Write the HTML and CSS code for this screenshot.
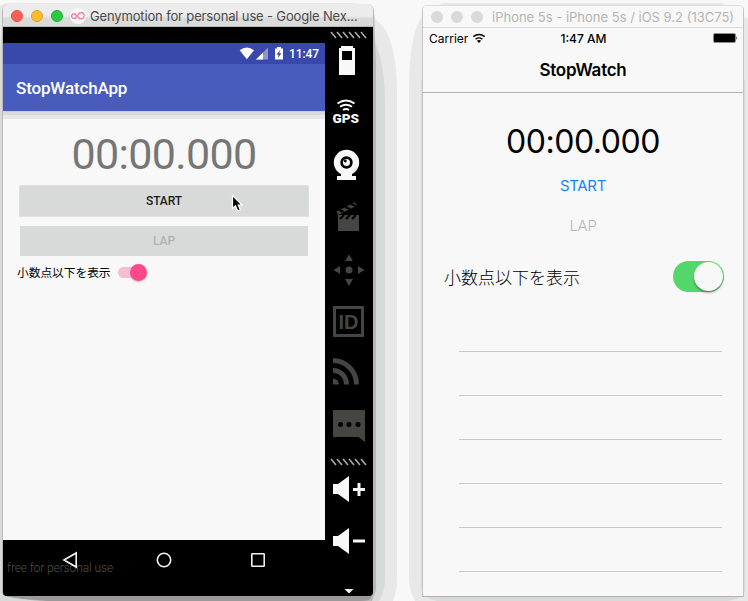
FILE: index.html
```html
<!DOCTYPE html>
<html lang="ja">
<head>
<meta charset="utf-8">
<title>StopWatch</title>
<link rel="stylesheet" href="styles.css">
</head>
<body>
<svg class="shadows" viewBox="0 0 748 601" aria-hidden="true">
  <path fill="#e8e8e8" d="M0 6Q3 2 25 3H350Q373 3 376 20C392 30 397 62 397 90V578Q397 592 393 601H0Z"/>
  <path fill="#d8dad9" d="M0 50L3 12H373V38Q385 62 385 100V582Q384 594 379 601H0Z"/>
  <path fill="#b9b7b8" d="M2 12Q2 4 9 4H367Q374 4 374 12L376 65V590L372 601H48Q20 601 2 593Z"/>
  <path fill="#9b9999" d="M5 590H373L371 598Q370 601 360 601H48Q10 598 5 596Z"/>
  <path fill="#e8e8e8" d="M443 3H722L748 19V601H415Q409 590 409 578V90Q409 35 422 16Z"/>
  <path fill="#d8dad9" d="M421 80H745V590Q744 599 727 601H437Q423 598 421 590Z"/>
</svg>
<main class="desktop">
  <section class="window genymotion">
    <header class="titlebar">
      <i class="dot red"></i><i class="dot yellow"></i><i class="dot green"></i>
      <svg class="geny-logo" viewBox="0 0 16 16"><circle cx="8" cy="8" r="8" fill="#f8f8f8"/><g fill="none" stroke="#ee719d" stroke-width="1.2"><circle cx="4" cy="8.2" r="2.3"/><circle cx="11" cy="7.7" r="3.1"/></g></svg>
      <span class="window-title">Genymotion for personal use - Google Nex...</span>
    </header>
    <div class="emulator">
      <div class="phone">
        <div class="statusbar">
          <svg class="status-icons" viewBox="238 44 48 20"><path fill="#fff" d="M239.700 50.200Q246.800 45 254 50.200L246.800 59.300Z"/><path fill="#8d96cf" d="M256 59.500L268 47.500V59.500Z"/><path fill="#fff" d="M256 59.500L263 52.500V59.500Z"/><path fill="#fff" d="M275 48.500H277V47H281V48.500H283V59.500H275Z"/><path fill="#3949ab" d="M280 50L276.500 54.700H278.500L277.800 58L281.500 53.300H279.300Z"/></svg>
          <span>11:47</span>
        </div>
        <div class="appbar">StopWatchApp</div>
        <div class="content">
          <div class="time">00:00.000</div>
          <button class="button start">START</button>
          <button class="button lap">LAP</button>
          <label class="switch-row"><span>小数点以下を表示</span><i class="switch"></i></label>
        </div>
        <div class="navbar">
          <span class="license">free for personal use</span>
          <svg class="nav-icons" viewBox="3 540 322 56" fill="none" stroke="#f1f1f1" stroke-width="1.600"><path d="M64 560L76.200 553V567Z"/><circle cx="164" cy="560" r="6.700"/><rect x="251.800" y="553.800" width="12.400" height="12.400" rx=".5"/></svg>
        </div>
      </div>
      <aside class="toolbar">
        <svg height="15" viewBox="325 27 48 15"><path class="grip" d="M331 32l5 6m1-6l5 6m1-6l5 6m1-6l5 6m1-6l5 6m1-6l5 6"/></svg>
        <svg height="44" viewBox="325 42 48 44"><path fill="#f8f8f8" fill-rule="evenodd" d="M339 48H341V46H353V48H355V75H339ZM342 51V60H352V51Z"/></svg>
        <svg height="52" viewBox="325 86 48 52"><path d="M337.500 103.500Q346 97.500 354.500 103.500M340 106.800Q346 102.500 352 106.800M343 110Q346 107.800 349 110" fill="none" stroke="#f8f8f8" stroke-width="2"/><text class="gps" x="332.500" y="123" textLength="26.500" lengthAdjust="spacingAndGlyphs">GPS</text></svg>
        <svg height="52" viewBox="325 138 48 52"><g fill="#f8f8f8"><circle cx="346.500" cy="162.500" r="12.700"/><path d="M341 172H352V176H356V180H337V176H341Z"/></g><circle cx="346.500" cy="162.500" r="6.200"/><circle cx="346.500" cy="162.500" r="3.500" fill="#f8f8f8"/><circle cx="345.300" cy="161" r="1.400"/></svg>
        <svg height="52" viewBox="325 190 48 52"><path fill="#454641" d="M336.500 211.500L355 202.300L357 205.500L338 215ZM338 215H359V231H338Z"/><path d="M339 210l5 2M345 207l5 2M351 204l5 2M340 219l4-4M346 219l4-4M352 219l4-4" stroke="#000" stroke-width="2"/></svg>
        <svg height="52" viewBox="325 242 48 52"><g fill="#454641"><circle cx="349" cy="270" r="3.500"/><path d="M349 254.500L353 261H345ZM349 286L353 279H345ZM333.500 270L340 266V274ZM364.500 270L358 266V274Z"/></g></svg>
        <svg height="52" viewBox="325 294 48 52"><rect x="334.500" y="307.500" width="28" height="28" fill="none" stroke="#454641" stroke-width="3"/><text class="id" x="338.500" y="329" textLength="20" lengthAdjust="spacingAndGlyphs">ID</text></svg>
        <svg height="52" viewBox="325 346 48 52"><g fill="none" stroke="#454641" stroke-width="5"><path d="M333 360.500A23.500 24 0 0 1 356.500 384.500M333 370.500A13.500 14 0 0 1 346.500 384.500"/></g><path fill="#454641" d="M333 378.500A6 6 0 0 1 339 384.500H333Z"/></svg>
        <svg height="52" viewBox="325 398 48 52"><path fill="#454641" d="M333 410H365V442L358.500 437H333Z"/><circle cx="340.500" cy="424.500" r="2.500"/><circle cx="349" cy="424.500" r="2.500"/><circle cx="358" cy="424.500" r="2.500"/></svg>
        <svg height="19" viewBox="325 450 48 19"><path class="grip" d="M331 459l5 6m1-6l5 6m1-6l5 6m1-6l5 6m1-6l5 6m1-6l5 6"/></svg>
        <svg height="52" viewBox="325 469 48 52"><path fill="#f8f8f8" d="M333 484H338L349 476V502L338 494H333ZM353 488H357.500V483H360.500V488H365V491H360.500V496H357.500V491H353Z"/></svg>
        <svg height="52" viewBox="325 521 48 52"><path fill="#f8f8f8" d="M333 536H338L349 528V554L338 546H333ZM353 539.500H365V542.500H353Z"/></svg>
        <svg height="23" viewBox="325 573 48 23"><path fill="#f8f8f8" d="M344.500 589H353.500L349 593.500Z"/></svg>
      </aside>
    </div>
  </section>

  <section class="window simulator">
    <header class="titlebar inactive">
      <i class="dot"></i><i class="dot"></i><i class="dot"></i>
      <span class="window-title">iPhone 5s - iPhone 5s / iOS 9.2 (13C75)</span>
    </header>
    <div class="ios-status">
      <span class="carrier"><span>Carrier</span>
        <svg width="14" height="12" viewBox="0 0 14 12"><path d="M1.300 4.600Q7 .3 12.700 4.600M3.600 7.100Q7 4.600 10.400 7.100" fill="none" stroke="#000" stroke-width="1.400"/><path d="M4.900 8.800Q7 7.400 9.100 8.800L7 11Z"/></svg></span>
      <span class="clock">1:47 AM</span>
      <svg class="ios-battery" width="25" height="10" viewBox="0 0 25 10"><rect x=".5" y=".5" width="22" height="9" rx="1.500" stroke="#8c8c8c"/><path d="M23.500 3Q25 5 23.500 7Z"/></svg>
    </div>
    <h1 class="ios-nav">StopWatch</h1>
    <div class="ios-time">00:00.000</div>
    <div class="ios-action ios-start">START</div>
    <div class="ios-action ios-lap">LAP</div>
    <label class="ios-row"><span>小数点以下を表示</span><i class="ios-switch"></i></label>
    <ul class="laps"><li></li><li></li><li></li><li></li><li></li><li></li></ul>
  </section>
</main>
<svg class="cursor" viewBox="0 0 14 20"><path d="M1.500 1.500V14.500L4.500 11.800L6.700 17L9.400 15.900L7.200 11H11Z" fill="#000" stroke="#fff" stroke-width="1.200"/></svg>
</body>
</html>
```
FILE: styles.css
```css
* { box-sizing: border-box; }
body { margin: 0; width: 748px; height: 601px; overflow: hidden; background: #f8f8f8; font-family: Roboto, "Noto Sans CJK JP", sans-serif; }
svg { display: block; }
.shadows { position: absolute; inset: 0; width: 748px; height: 601px; }
.desktop { position: relative; display: flex; gap: 49px; padding: 4px 0 0 3px; }
.window { flex: none; overflow: hidden; }
.genymotion { width: 370px; height: 592px; border-radius: 5px 5px 4px 4px; }
.titlebar { display: flex; align-items: center; height: 23px; padding: 1px 0 0 8px; background: linear-gradient(#ececec 0 55%, #d9dbda 65%); border-bottom: 1px solid #b8b8b8; }
.dot { flex: none; width: 12px; height: 12px; margin-right: 8px; border-radius: 50%; background: #d8dad9; }
.red { background: #ff5f57; border: 1px solid #e64c44; }
.yellow { background: #ffbd2e; border: 1px solid #e0a028; }
.green { background: #28c940; border: 1px solid #1eac32; }
.geny-logo { width: 16px; height: 16px; margin-left: -1px; }
.window-title { margin-left: 4px; color: #4a4a4a; font: 13px/20px Inter, sans-serif; letter-spacing: -.15px; white-space: nowrap; }
.emulator { display: flex; height: 569px; background: #000; }
.phone { width: 322px; padding-top: 16px; }
.statusbar { display: flex; align-items: center; justify-content: flex-end; height: 21px; padding-right: 7px; background: #3949ab; color: #fff; font-size: 12px; font-weight: 500; line-height: 21px; letter-spacing: -.1px; }
.status-icons { width: 48px; height: 20px; margin-right: 3px; }
.statusbar span { width: 29px; padding-top: 1px; }
.appbar { height: 47px; padding-left: 13px; background: #485cbd; color: #fff; font-size: 17px; font-weight: 500; line-height: 49px; letter-spacing: -.15px; }
.content { height: 429px; padding: 0 16px; background: linear-gradient(#cfcfcf 0 1px, #dadada 1px 4px, #e8e8e8 4px 8px, #f8f8f8 8px); }
.time { height: 74px; padding-top: 17px; color: #767676; font-size: 43px; line-height: 52px; letter-spacing: -.65px; text-align: center; }
.button { display: block; border: 0; padding: 0; background: #d8dad9; font: 500 12px/31px Roboto, sans-serif; letter-spacing: -.1px; }
.start { width: 290px; height: 32px; border-radius: 2px; box-shadow: inset 0 0 0 1px #dfe1e0; color: #1b1b1b; }
.lap { width: 288px; height: 30px; margin: 9px 0 0 1px; color: #b0b2b1; }
.switch-row { display: flex; align-items: center; height: 33px; margin-left: -2px; font-size: 11.700px; line-height: 18px; color: #000; }
.switch-row span { width: 101px; white-space: nowrap; }
.switch { display: flex; justify-content: flex-end; align-items: center; width: 29px; height: 11px; border-radius: 6px; background: #f7bdd2; }
.switch::after { content: ""; flex: none; width: 17px; height: 17px; border-radius: 50%; background: #ff4889; box-shadow: 0 1px 2px #bbb; }
.navbar { position: relative; height: 56px; background: #000; }
.license { position: absolute; left: 4px; top: 19px; color: #505050; font-size: 12px; font-weight: 300; line-height: 19px; letter-spacing: -.1px; white-space: nowrap; }
.nav-icons { position: relative; width: 322px; height: 56px; }
.toolbar { width: 48px; }
.toolbar svg { width: 48px; }
.grip { fill: none; stroke: #aaa; stroke-width: 1.600; }
.gps { font: 900 12px Roboto, sans-serif; fill: #f8f8f8; }
.id { font: 700 20px "Liberation Sans", sans-serif; fill: #454641; }
.simulator { width: 322px; height: 592px; margin-top: 1px; background: #f8f8f8; border: 1px solid #c5c5c5; border-top-color: #dcdcdc; border-bottom-color: #b3b3b3; border-radius: 5px 5px 0 0; color: #000; font-family: Inter, "Noto Sans CJK JP", sans-serif; }
.titlebar.inactive { height: 22px; padding-top: 0; background: #f8f8f8; border-color: #d8d8d8; }
.inactive .window-title { margin-left: 1px; color: #b5b5b5; letter-spacing: 0; }
.ios-status { display: grid; grid-template-columns: 1fr auto 1fr; align-items: center; height: 20px; padding: 0 5px 0 6px; font-size: 12px; }
.carrier { display: flex; align-items: center; gap: 4px; }
.clock { font-weight: 500; }
.ios-battery { justify-self: end; }
.ios-nav { height: 45px; margin: 0; border-bottom: 1px solid #b2b2b2; font-size: 17px; font-weight: 600; line-height: 45px; letter-spacing: -.25px; text-align: center; }
.ios-time { height: 78px; padding-top: 28px; font-size: 32px; line-height: 42px; letter-spacing: -.45px; text-align: center; }
.ios-action { height: 40px; font-size: 15px; line-height: 30px; letter-spacing: -.3px; text-align: center; }
.ios-start { color: #1684f8; }
.ios-lap { color: #b7b7b7; font-weight: 300; }
.ios-row { display: flex; align-items: center; justify-content: space-between; height: 33px; margin-top: 9px; padding: 0 19px 0 21px; font: 300 17px/31px "Noto Sans CJK JP", sans-serif; }
.ios-switch { display: flex; justify-content: flex-end; width: 51px; height: 31px; padding: 1px; border-radius: 16px; background: #53d76a; }
.ios-switch::after { content: ""; width: 29px; height: 29px; border-radius: 50%; background: #f8f8f8; box-shadow: 0 2px 2px rgba(0,0,0,.3); }
.laps { margin: 15px 21px 0 36px; padding: 0; list-style: none; }
.laps li { height: 44px; border-bottom: 1px solid #cacaca; }
.cursor { position: absolute; left: 231px; top: 194px; width: 14px; height: 20px; }
```
